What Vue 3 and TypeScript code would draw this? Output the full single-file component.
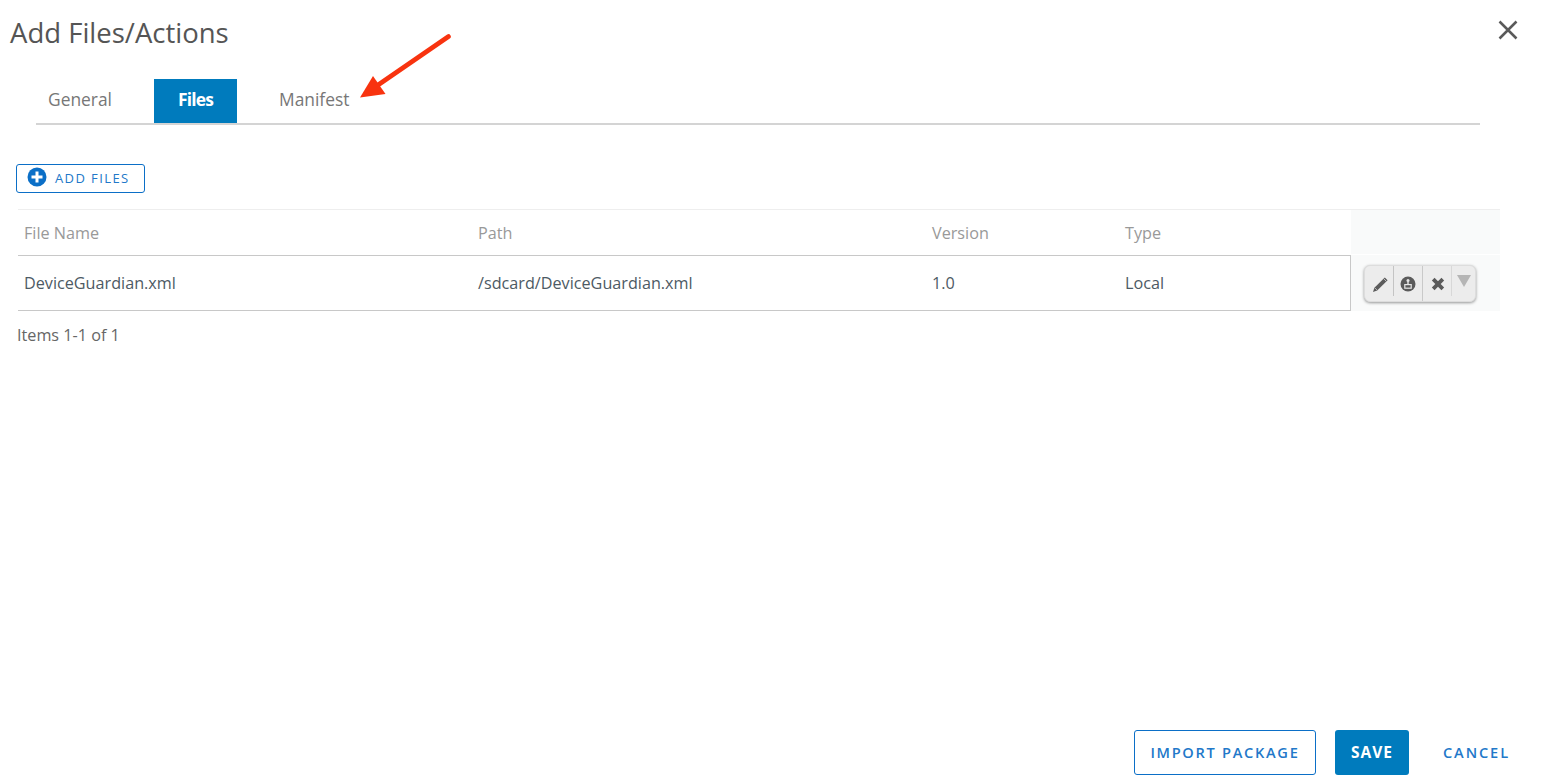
<script setup lang="ts">
interface Row { name: string; path: string; version: string; type: string }
const rows: Row[] = [
  { name: 'DeviceGuardian.xml', path: '/sdcard/DeviceGuardian.xml', version: '1.0', type: 'Local' },
]
</script>

<template>
  <div class="dialog">
    <h1 class="title">Add Files/Actions</h1>
    <svg class="close" width="20" height="20" viewBox="0 0 20 20">
      <path d="M1.5 1.5 L18.5 18.5 M18.5 1.5 L1.5 18.5" stroke="#5a5a5a" stroke-width="2.5" fill="none" />
    </svg>

    <nav class="tabs">
      <span class="tab general">General</span>
      <span class="tab active">Files</span>
      <span class="tab manifest">Manifest</span>
    </nav>

    <svg class="arrow" width="100" height="72" viewBox="0 0 100 72">
      <path d="M88.5 2.5 L18 51" stroke="#f8330f" stroke-width="4.6" stroke-linecap="round" fill="none" />
      <path d="M0 63.5 L13 42 L25.5 60 Z" fill="#f8330f" />
    </svg>

    <div class="toolbar">
      <button class="add-btn">
        <svg width="20" height="20" viewBox="0 0 20 20">
          <circle cx="10" cy="10" r="9.5" fill="#0b6fc7" />
          <path d="M10 4.5 V15.5 M4.5 10 H15.5" stroke="#fff" stroke-width="3" />
        </svg>
        <span class="add-label">ADD FILES</span>
      </button>
    </div>

    <div class="grid">
      <div class="grid-main">
        <div class="grid-row head">
          <span>File Name</span><span>Path</span><span>Version</span><span>Type</span>
        </div>
        <div v-for="r in rows" :key="r.name" class="grid-row body">
          <span>{{ r.name }}</span><span>{{ r.path }}</span><span>{{ r.version }}</span><span>{{ r.type }}</span>
        </div>
      </div>
      <div class="grid-actions">
        <div class="action-head"></div>
        <div class="action-cell">
          <div class="action-group">
            <span class="act short">
              <svg class="pencil" width="18" height="18" viewBox="0 0 18 18">
                <path d="M1 17 L2.4 12.8 L12.8 2.4 L15.6 5.2 L5.2 15.6 Z" fill="#5b5b5b" />
                <path d="M2.9 12.9 L5.1 15.1" stroke="#e8e8e8" stroke-width="0.6" />
                <path d="M11.9 3.9 L14.1 6.1" stroke="#e8e8e8" stroke-width="0.7" />
              </svg>
            </span>
            <span class="act">
              <svg width="16" height="16" viewBox="0 0 16 16">
                <circle cx="8" cy="8" r="7.5" fill="#5b5b5b" />
                <circle cx="8" cy="4.6" r="1.5" fill="#e8e8e8" />
                <path d="M8 5.5 V8.6" stroke="#e8e8e8" stroke-width="1.4" />
                <rect x="4.8" y="8.6" width="6.4" height="3.6" fill="none" stroke="#e8e8e8" stroke-width="1.2" />
              </svg>
            </span>
            <span class="act short light">
              <svg width="14" height="14" viewBox="0 0 14 14">
                <path d="M2.2 2.2 L11.8 11.8 M11.8 2.2 L2.2 11.8" stroke="#5b5b5b" stroke-width="3.8" />
              </svg>
            </span>
            <span class="act last">
              <svg width="14" height="12" viewBox="0 0 14 12">
                <path d="M0 0 H14 L7 12 Z" fill="#b5b5b5" />
              </svg>
            </span>
          </div>
        </div>
      </div>
    </div>
    <div class="items">Items 1-1 of 1</div>

    <footer class="footer">
      <button class="btn outline">IMPORT PACKAGE</button>
      <button class="btn primary">SAVE</button>
      <button class="btn link">CANCEL</button>
    </footer>
  </div>
</template>

<style>
html, body { margin: 0; background: #fff; }
</style>

<style scoped>
.dialog {
  position: relative;
  width: 1547px;
  height: 782px;
  display: flex;
  flex-direction: column;
  font-family: "Open Sans", "Liberation Sans", sans-serif;
  color: #555;
  overflow: hidden;
}
.title {
  margin: 0;
  padding: 15px 0 0 10px;
  height: 64px;
  box-sizing: border-box;
  font-size: 27.5px;
  line-height: 36px;
  font-weight: 400;
  color: #555;
}
.close { position: absolute; left: 1498px; top: 20px; }
.arrow { position: absolute; left: 360px; top: 34px; }
.tabs {
  margin: 15px 67px 0 36px;
  height: 46px;
  display: flex;
  border-bottom: 2px solid #d4d4d4;
  box-sizing: border-box;
}
.tab { font-size: 17.4px; line-height: 41px; height: 44px; color: #777; }
.general { margin-left: 12px; width: 106px; }
.active {
  width: 83px;
  text-align: center;
  background: #007bbd;
  color: #fff;
  font-weight: 700;
  letter-spacing: -0.8px;
}
.manifest { margin-left: 42px; }
.toolbar { padding: 39px 0 0 16px; height: 84px; box-sizing: border-box; }
.add-btn {
  width: 129px;
  height: 29px;
  box-sizing: border-box;
  padding: 0 0 0 10px;
  display: flex;
  align-items: center;
  gap: 8px;
  background: #fff;
  border: 1px solid #0b6fc7;
  border-radius: 3px;
  color: #2278c9;
  font: 400 13px "Open Sans", sans-serif;
  letter-spacing: 1.4px;
}
.add-btn svg { margin-top: -3px; }
.add-label { margin-top: -2px; }
.grid {
  margin-left: 18px;
  width: 1482px;
  display: flex;
  border-top: 1px solid #eee;
}
.grid-main { width: 1333px; }
.grid-row {
  display: grid;
  grid-template-columns: 454px 454px 193px 1fr;
  padding-left: 6px;
  font-size: 16.2px;
  align-items: center;
}
.head { height: 45px; color: #999; }
.body {
  color: #4d5a64;
  border-top: 1px solid #c8c8c8;
  border-bottom: 1px solid #c8c8c8;
  border-right: 1px solid #c8c8c8;
  height: 54px;
}
.grid-actions { flex: 1; }
.action-head { height: 44px; background: #f9fafa; }
.action-cell {
  height: 56px;
  margin-top: 1px;
  background: #f9fafa;
  padding: 10px 0 0 13px;
  box-sizing: border-box;
}
.action-group {
  width: 112px;
  height: 37px;
  display: flex;
  box-sizing: border-box;
  background: #ececec;
  border: 1px solid #ddd;
  border-radius: 6px;
  box-shadow: 0 1px 3px rgba(0, 0, 0, 0.4);
}
.act {
  width: 29px;
  display: flex;
  align-items: center;
  justify-content: center;
  border-right: 1px solid #c9c9c9;
  padding-top: 1px;
  box-sizing: border-box;
}
.act.short {
  border-right: none;
  background: linear-gradient(#c4c4c4, #c4c4c4) right top / 1px 30px no-repeat;
}
.act.short.light {
  background: linear-gradient(#d8d8d8, #d8d8d8) right top / 1px 30px no-repeat;
}
.pencil { margin-left: 2px; }
.act.last { border-right: none; flex: 1; align-items: flex-start; padding-top: 9px; }
.items { margin: 14px 0 0 17px; font-size: 16.2px; line-height: 20px; color: #666; }
.footer {
  margin-top: auto;
  padding: 0 37px 7px 0;
  display: flex;
  justify-content: flex-end;
  align-items: center;
}
.btn {
  height: 45px;
  box-sizing: border-box;
  border-radius: 3px;
  font: 600 14.6px "Open Sans", sans-serif;
  letter-spacing: 1.7px;
  padding: 0 0 2px;
}
.outline { width: 182px; background: #fff; border: 1px solid #0b6fc7; color: #2278c9; }
.primary { width: 74px; margin-left: 19px; background: #007bbd; border: none; color: #fff; font-size: 15.5px; font-weight: 700; letter-spacing: 1px; }
.link { margin-left: 34px; background: none; border: none; color: #2278c9; letter-spacing: 1.9px; }
</style>
